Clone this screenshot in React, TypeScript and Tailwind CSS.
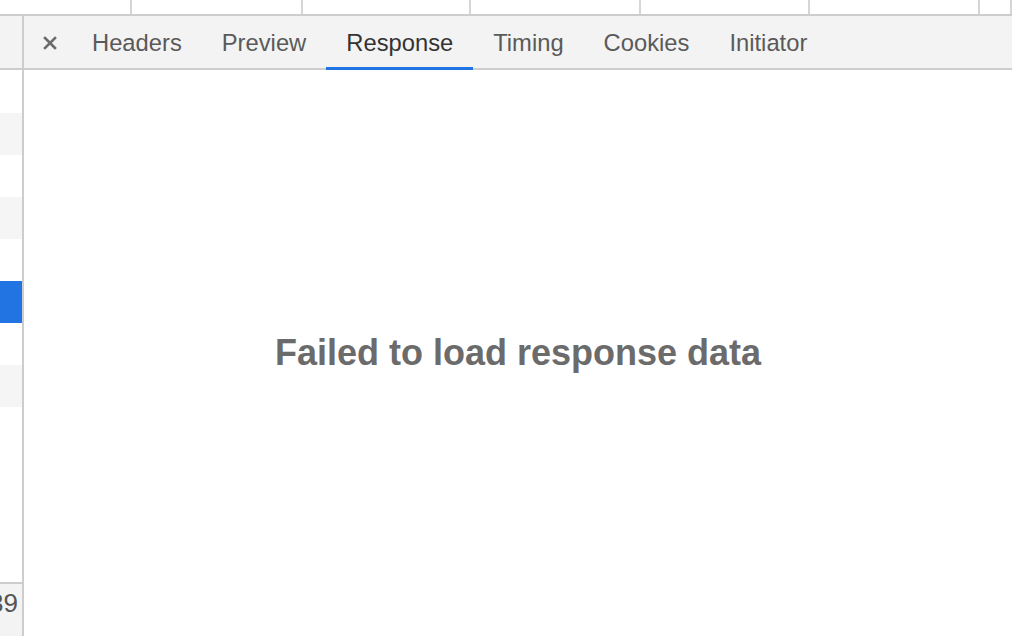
import React from "react";

const tabs = ["Headers", "Preview", "Response", "Timing", "Cookies", "Initiator"];

export default function App() {
  const rows = [
    { h: "h-[43px]", c: "bg-white" },
    { h: "h-[42px]", c: "bg-[#f5f5f5]" },
    { h: "h-[42px]", c: "bg-white" },
    { h: "h-[42px]", c: "bg-[#f5f5f5]" },
    { h: "h-[42px]", c: "bg-white" },
    { h: "h-[42px]", c: "bg-[#2374e3]" },
    { h: "h-[42px]", c: "bg-white" },
    { h: "h-[42px]", c: "bg-[#f5f5f5]" },
  ];
  const cells = ["w-[132px]", "w-[171px]", "w-[168px]", "w-[170px]", "w-[169px]", "w-[170px]", "w-[32px]"];
  return (
    <div
      className="w-[1012px] h-[636px] flex flex-col overflow-hidden bg-white"
      style={{ fontFamily: '"Liberation Sans", Arial, Helvetica, sans-serif' }}
    >
      {/* top strip of table header */}
      <div className="h-[16px] flex border-b-2 border-[#cdcdcd] shrink-0">
        {cells.map((w, i) => (
          <div key={i} className={`${w} h-full border-r-2 border-[#d6d6d6] shrink-0`} />
        ))}
      </div>
      <div className="flex-1 flex min-h-0">
        {/* left column */}
        <div className="w-[24px] border-r-2 border-[#cdcdcd] flex flex-col shrink-0">
          <div className="h-[54px] bg-[#f3f3f3] border-b-2 border-[#cdcdcd] shrink-0" />
          {rows.map((r, i) => (
            <div key={i} className={`${r.h} ${r.c} shrink-0`} />
          ))}
          <div className="flex-1 bg-white" />
          <div className="h-[54px] bg-[#f3f3f3] border-t-2 border-[#cdcdcd] shrink-0 flex justify-end overflow-hidden pt-[4px] pr-[4px]">
            <span className="text-[26px] leading-[30px] text-[#555555] whitespace-nowrap">1.39</span>
          </div>
        </div>
        {/* right panel */}
        <div className="flex-1 flex flex-col min-w-0">
          <div className="h-[54px] bg-[#f3f3f3] border-b-2 border-[#cdcdcd] flex items-stretch shrink-0">
            <div className="flex items-center pl-[19px] pr-[15px] pt-[1px]">
              <svg width="14" height="14" viewBox="0 0 14 14">
                <path d="M2 2 L12 12 M12 2 L2 12" stroke="#6b6b6b" strokeWidth="2.6" strokeLinecap="square" />
              </svg>
            </div>
            {tabs.map((t) => {
              const active = t === "Response";
              return (
                <div
                  key={t}
                  className={`relative flex items-center px-[20px] pt-[2px] text-[23.75px] ${active ? "text-[#333333]" : "text-[#5a5a5a]"}`}
                >
                  {t}
                  {active && <div className="absolute left-0 right-0 bottom-[-2px] h-[3px] bg-[#1f74e6]" />}
                </div>
              );
            })}
          </div>
          <div className="flex-1 flex items-center justify-center">
            <span className="text-[36px] font-bold text-[#6b6b6b]">Failed to load response data</span>
          </div>
        </div>
      </div>
    </div>
  );
}
